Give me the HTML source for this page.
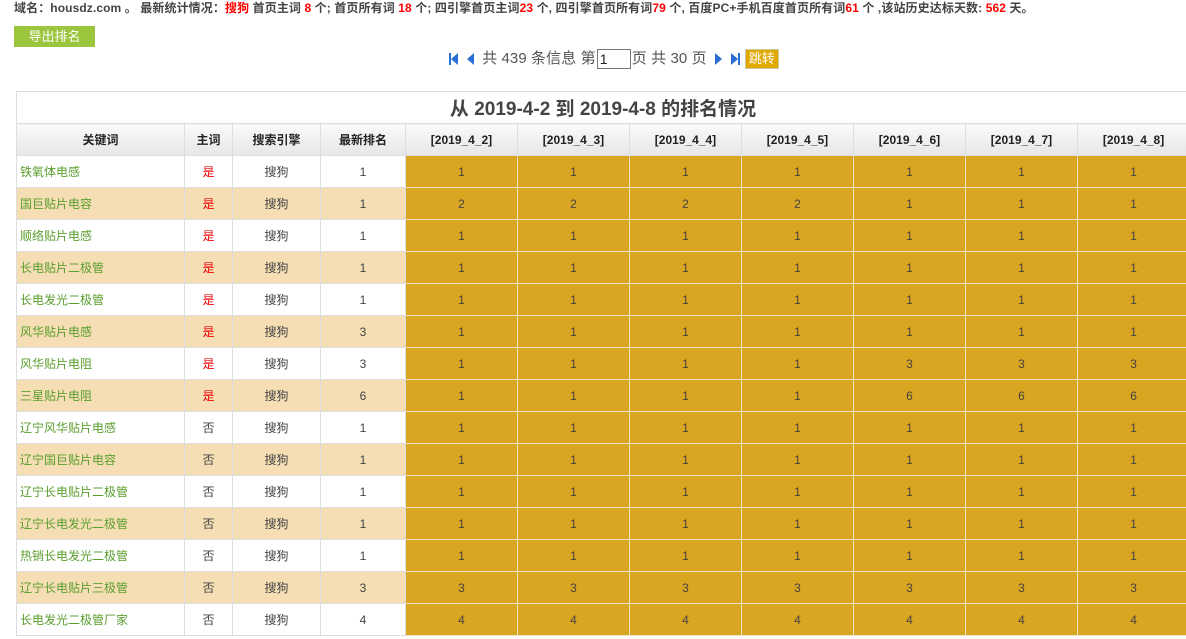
<!DOCTYPE html>
<html><head><meta charset="utf-8"><style>
body{margin:0;width:1186px;height:639px;overflow:hidden;background:#fff;font-family:"Liberation Sans","Noto Sans CJK SC",sans-serif;color:#444;position:relative}
.top{position:absolute;left:14px;top:0;font-size:12px;font-weight:bold;color:#444;line-height:16px;white-space:nowrap;letter-spacing:0.1px}
.r{color:#f00}
.btn{position:absolute;left:14px;top:26px;width:81px;height:21px;background:#9ac53c;color:#fff;font-size:13px;line-height:21px;text-align:center}
.pg{position:absolute;left:449px;top:48px;font-size:15px;color:#555;line-height:22px;white-space:nowrap;letter-spacing:0.1px}
.pg .ib{display:inline-block;width:34px;height:20px;border:1px solid #777;vertical-align:middle;font-size:14px;line-height:18px;color:#222;padding-left:2px;box-sizing:border-box;margin:0 1px}
.pg .go{display:inline-block;background:#e0a800;color:#fff;font-size:13px;padding:0 3px;line-height:18px;border:1px solid #c9c9a0;vertical-align:middle;margin-left:5px;letter-spacing:0}
.tri{display:inline-block;width:0;height:0;border-top:6px solid transparent;border-bottom:6px solid transparent;vertical-align:middle}
.bar{display:inline-block;width:2px;height:12px;background:#2a6fd6;vertical-align:middle}
table{position:absolute;left:16px;top:91px;border-collapse:collapse;table-layout:fixed;width:1173px;font-size:12px}
td,th{border:1px solid #ddd;height:31px;text-align:center;padding:0}
th{font-weight:bold;color:#222;background:linear-gradient(#fafafa,#e6e6e6);font-size:12px}
.title td{font-size:19px;font-weight:bold;color:#444;height:31px;text-align:center;background:#fff}
td.k{text-align:left;color:#5a9e2e;padding-left:3px}
td.y{color:#e00}
tr.w td.l{background:#f5deb3}
td.g{background:#daa520;border-color:#f0e3c0;color:#444}
</style></head><body>
<div class="top">域名：housdz.com 。 最新统计情况：<span class="r">搜狗</span> 首页主词 <span class="r">8</span> 个; 首页所有词 <span class="r">18</span> 个; 四引擎首页主词<span class="r">23</span> 个, 四引擎首页所有词<span class="r">79</span> 个, 百度PC+手机百度首页所有词<span class="r">61</span> 个 ,该站历史达标天数: <span class="r">562</span> 天。</div>
<div class="btn">导出排名</div>
<div class="pg"><span class="bar"></span><span class="tri" style="border-right:7px solid #2a6fd6"></span>&nbsp;&nbsp;<span class="tri" style="border-right:7px solid #2a6fd6"></span> &nbsp;共 439 条信息 第<span class="ib">1</span>页 共 30 页 &nbsp;<span class="tri" style="border-left:7px solid #2a6fd6"></span>&nbsp;&nbsp;<span class="tri" style="border-left:7px solid #2a6fd6"></span><span class="bar"></span><span class="go">跳转</span></div>
<table>
<colgroup><col style="width:168px"><col style="width:48px"><col style="width:88px"><col style="width:85px"><col style="width:112px"><col style="width:112px"><col style="width:112px"><col style="width:112px"><col style="width:112px"><col style="width:112px"><col style="width:112px"></colgroup>
<tr class="title"><td colspan="11">从 2019-4-2 到 2019-4-8 的排名情况</td></tr>
<tr><th>关键词</th><th>主词</th><th>搜索引擎</th><th>最新排名</th><th>[2019_4_2]</th><th>[2019_4_3]</th><th>[2019_4_4]</th><th>[2019_4_5]</th><th>[2019_4_6]</th><th>[2019_4_7]</th><th>[2019_4_8]</th></tr>
<tr><td class="k l">铁氧体电感</td><td class="y l">是</td><td class="l">搜狗</td><td class="l">1</td><td class="g">1</td><td class="g">1</td><td class="g">1</td><td class="g">1</td><td class="g">1</td><td class="g">1</td><td class="g">1</td></tr>
<tr class="w"><td class="k l">国巨贴片电容</td><td class="y l">是</td><td class="l">搜狗</td><td class="l">1</td><td class="g">2</td><td class="g">2</td><td class="g">2</td><td class="g">2</td><td class="g">1</td><td class="g">1</td><td class="g">1</td></tr>
<tr><td class="k l">顺络贴片电感</td><td class="y l">是</td><td class="l">搜狗</td><td class="l">1</td><td class="g">1</td><td class="g">1</td><td class="g">1</td><td class="g">1</td><td class="g">1</td><td class="g">1</td><td class="g">1</td></tr>
<tr class="w"><td class="k l">长电贴片二极管</td><td class="y l">是</td><td class="l">搜狗</td><td class="l">1</td><td class="g">1</td><td class="g">1</td><td class="g">1</td><td class="g">1</td><td class="g">1</td><td class="g">1</td><td class="g">1</td></tr>
<tr><td class="k l">长电发光二极管</td><td class="y l">是</td><td class="l">搜狗</td><td class="l">1</td><td class="g">1</td><td class="g">1</td><td class="g">1</td><td class="g">1</td><td class="g">1</td><td class="g">1</td><td class="g">1</td></tr>
<tr class="w"><td class="k l">风华贴片电感</td><td class="y l">是</td><td class="l">搜狗</td><td class="l">3</td><td class="g">1</td><td class="g">1</td><td class="g">1</td><td class="g">1</td><td class="g">1</td><td class="g">1</td><td class="g">1</td></tr>
<tr><td class="k l">风华贴片电阻</td><td class="y l">是</td><td class="l">搜狗</td><td class="l">3</td><td class="g">1</td><td class="g">1</td><td class="g">1</td><td class="g">1</td><td class="g">3</td><td class="g">3</td><td class="g">3</td></tr>
<tr class="w"><td class="k l">三星贴片电阻</td><td class="y l">是</td><td class="l">搜狗</td><td class="l">6</td><td class="g">1</td><td class="g">1</td><td class="g">1</td><td class="g">1</td><td class="g">6</td><td class="g">6</td><td class="g">6</td></tr>
<tr><td class="k l">辽宁风华贴片电感</td><td class="l">否</td><td class="l">搜狗</td><td class="l">1</td><td class="g">1</td><td class="g">1</td><td class="g">1</td><td class="g">1</td><td class="g">1</td><td class="g">1</td><td class="g">1</td></tr>
<tr class="w"><td class="k l">辽宁国巨贴片电容</td><td class="l">否</td><td class="l">搜狗</td><td class="l">1</td><td class="g">1</td><td class="g">1</td><td class="g">1</td><td class="g">1</td><td class="g">1</td><td class="g">1</td><td class="g">1</td></tr>
<tr><td class="k l">辽宁长电贴片二极管</td><td class="l">否</td><td class="l">搜狗</td><td class="l">1</td><td class="g">1</td><td class="g">1</td><td class="g">1</td><td class="g">1</td><td class="g">1</td><td class="g">1</td><td class="g">1</td></tr>
<tr class="w"><td class="k l">辽宁长电发光二极管</td><td class="l">否</td><td class="l">搜狗</td><td class="l">1</td><td class="g">1</td><td class="g">1</td><td class="g">1</td><td class="g">1</td><td class="g">1</td><td class="g">1</td><td class="g">1</td></tr>
<tr><td class="k l">热销长电发光二极管</td><td class="l">否</td><td class="l">搜狗</td><td class="l">1</td><td class="g">1</td><td class="g">1</td><td class="g">1</td><td class="g">1</td><td class="g">1</td><td class="g">1</td><td class="g">1</td></tr>
<tr class="w"><td class="k l">辽宁长电贴片三极管</td><td class="l">否</td><td class="l">搜狗</td><td class="l">3</td><td class="g">3</td><td class="g">3</td><td class="g">3</td><td class="g">3</td><td class="g">3</td><td class="g">3</td><td class="g">3</td></tr>
<tr><td class="k l">长电发光二极管厂家</td><td class="l">否</td><td class="l">搜狗</td><td class="l">4</td><td class="g">4</td><td class="g">4</td><td class="g">4</td><td class="g">4</td><td class="g">4</td><td class="g">4</td><td class="g">4</td></tr>
</table>
</body></html>
